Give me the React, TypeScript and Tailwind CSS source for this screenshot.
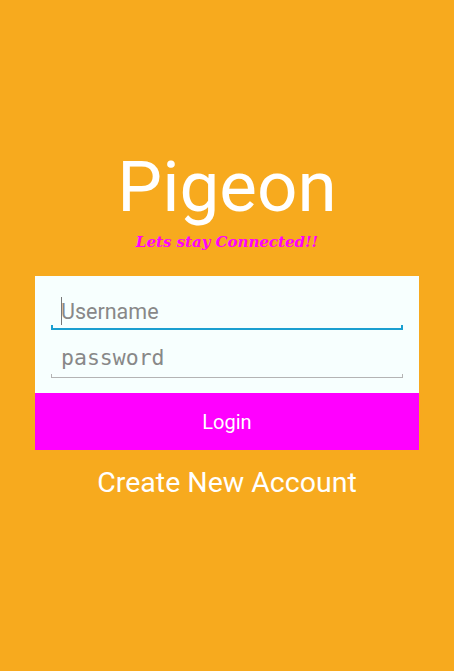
export default function App() {
  return (
    <div className="w-[454px] h-[671px] bg-[#f7aa1e] flex flex-col items-center" style={{ fontFamily: "Roboto, sans-serif" }}>
      <div className="h-[145px]" />
      <div className="text-white text-[71px] leading-[84px] font-normal">Pigeon</div>
      <div className="text-[#ff00ff] text-[15px] leading-[20px] font-bold italic mt-[3px]" style={{ fontFamily: '"DejaVu Serif", serif' }}>Lets stay Connected!!</div>
      <div className="mt-[24px] w-[384px] bg-[#f7fffe] flex flex-col">
        <div className="px-[16px] pt-[20px] pb-[15px] flex flex-col">
          <div className="relative h-[34px] flex items-center">
            <div className="absolute left-[10px] top-[1px] w-[1px] h-[28px] bg-[#777]" />
            <span className="pl-[10px] text-[21.5px] text-[#888] mt-[-1px]">Username</span>
            <div className="absolute left-0 right-0 bottom-0 h-[2px] bg-[#1a9fd0]" />
            <div className="absolute left-0 bottom-0 w-[2px] h-[5px] bg-[#1a9fd0]" />
            <div className="absolute right-0 bottom-0 w-[2px] h-[5px] bg-[#1a9fd0]" />
          </div>
          <div className="relative h-[37px] mt-[11px] flex items-center">
            <span className="pl-[10px] text-[21.5px] text-[#888] mt-[-3px]" style={{ fontFamily: '"DejaVu Sans Mono", monospace' }}>password</span>
            <div className="absolute left-0 right-0 bottom-0 h-[1px] bg-[#b4b4b4]" />
            <div className="absolute left-0 bottom-0 w-[1px] h-[4px] bg-[#b4b4b4]" />
            <div className="absolute right-0 bottom-0 w-[1px] h-[4px] bg-[#b4b4b4]" />
          </div>
        </div>
        <div className="h-[57px] bg-[#ff00ff] flex items-center justify-center text-white text-[20px]">Login</div>
      </div>
      <div className="mt-[17px] text-white text-[28.5px] leading-[32px]">Create New Account</div>
    </div>
  );
}
